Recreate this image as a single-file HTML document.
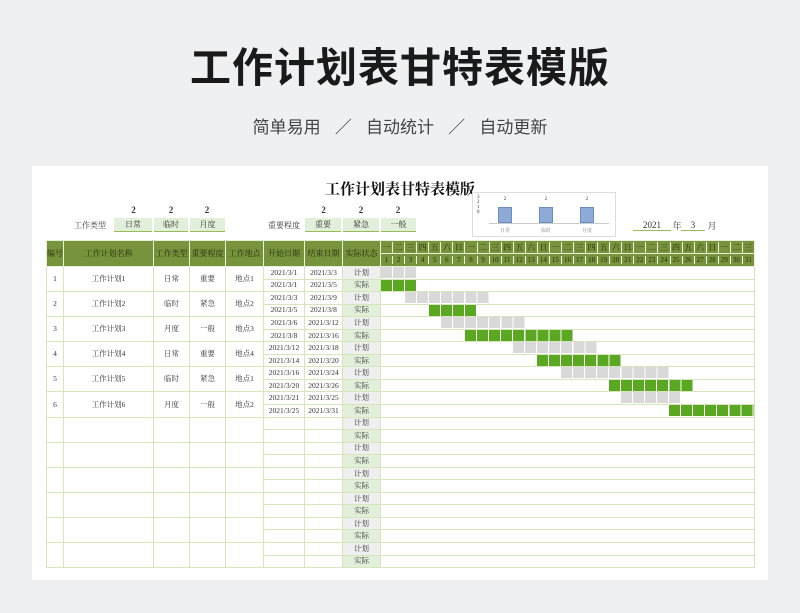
<!DOCTYPE html>
<html><head><meta charset="utf-8"><style>
*{margin:0;padding:0;box-sizing:border-box}
body{width:800px;height:613px;background:#eff0f2;position:relative;overflow:hidden;font-family:"Liberation Serif","Noto Serif CJK SC",serif}
.h1{position:absolute;top:34px;left:0;width:800px;text-align:center;font:bold 41px "Liberation Sans","Noto Sans CJK SC",sans-serif;color:#1a1a1a;letter-spacing:1px}
.sub{position:absolute;top:113px;left:0;width:800px;text-align:center;font:17px "Liberation Sans","Noto Sans CJK SC",sans-serif;color:#444;word-spacing:0}
.card{position:absolute;left:32px;top:166px;width:736px;height:414px;background:#fff}
.a{position:absolute;font-size:8px;color:#333;text-align:center}
.box{position:absolute;height:14px;background:#e2efda;border-bottom:1px solid #9bbb59;font-size:8px;line-height:13px;text-align:center;color:#333}
table{position:absolute;left:46px;top:240px;border-collapse:collapse;table-layout:fixed;font-size:7.5px;color:#333}
td{border:1px solid #d8e4bc;text-align:center;height:12.55px;padding:0;line-height:10px;white-space:nowrap;overflow:hidden}
th{background:#77933c;color:#1f2d0c;font-weight:normal;border:1px solid #e8efd8;font-size:8px;height:13px;padding:0}
td.p{background:#efefef}td.s{background:#e2efda}
td.g{border-left:none;border-right:1px solid #d8e4bc}
.bar{position:absolute;height:11px}
</style></head><body>
<div class="h1">工作计划表甘特表模版</div>
<div class="sub">简单易用 &nbsp; ／ &nbsp; 自动统计 &nbsp; ／ &nbsp; 自动更新</div>
<div class="card"></div>
<div class="a" style="left:250px;top:178px;width:300px;font-size:15px;font-weight:bold;color:#111">工作计划表甘特表模版</div>
<div class="a" style="left:114px;top:205px;width:39px;font-weight:bold;font-size:9px">2</div>
<div class="a" style="left:153px;top:205px;width:36px;font-weight:bold;font-size:9px">2</div>
<div class="a" style="left:189px;top:205px;width:36px;font-weight:bold;font-size:9px">2</div>
<div class="a" style="left:305px;top:205px;width:37px;font-weight:bold;font-size:9px">2</div>
<div class="a" style="left:342px;top:205px;width:38px;font-weight:bold;font-size:9px">2</div>
<div class="a" style="left:380px;top:205px;width:36px;font-weight:bold;font-size:9px">2</div>
<div class="a" style="left:70px;top:220px;width:40px">工作类型</div>
<div class="box" style="left:114px;top:218px;width:38px">日常</div>
<div class="box" style="left:154px;top:218px;width:34px">临时</div>
<div class="box" style="left:190px;top:218px;width:35px">月度</div>
<div class="a" style="left:265px;top:220px;width:38px">重要程度</div>
<div class="box" style="left:305px;top:218px;width:36px">重要</div>
<div class="box" style="left:343px;top:218px;width:36px">紧急</div>
<div class="box" style="left:381px;top:218px;width:35px">一般</div>
<div style="position:absolute;left:472px;top:192px;width:144px;height:45px;border:1px solid #ddd;background:#fff">
<div style="position:absolute;left:16px;top:30px;width:120px;height:1px;background:#ccc"></div>
<div class="a" style="left:4px;top:2px;font-size:5px">3<br>2<br>1<br>0</div>
<div style="position:absolute;left:25px;top:14px;width:14px;height:16px;background:#8eaad6;border:1px solid #6a8cc0"></div>
<div style="position:absolute;left:66px;top:14px;width:14px;height:16px;background:#8eaad6;border:1px solid #6a8cc0"></div>
<div style="position:absolute;left:107px;top:14px;width:14px;height:16px;background:#8eaad6;border:1px solid #6a8cc0"></div>
<div class="a" style="left:25px;top:4px;width:14px;font-size:5px">2</div>
<div class="a" style="left:66px;top:4px;width:14px;font-size:5px">2</div>
<div class="a" style="left:107px;top:4px;width:14px;font-size:5px">2</div>
<div class="a" style="left:22px;top:34px;width:20px;font-size:5px;color:#888">日常</div>
<div class="a" style="left:63px;top:34px;width:20px;font-size:5px;color:#888">临时</div>
<div class="a" style="left:104px;top:34px;width:20px;font-size:5px;color:#888">月度</div>
</div>
<div class="a" style="left:633px;top:220px;width:38px;font-size:9px;border-bottom:1px solid #9bbb59">2021</div>
<div class="a" style="left:671px;top:219px;width:12px;font-size:9px">年</div>
<div class="a" style="left:681px;top:220px;width:24px;font-size:9px;border-bottom:1px solid #9bbb59">3</div>
<div class="a" style="left:706px;top:219px;width:12px;font-size:9px">月</div>

<table>
<colgroup><col style="width:17px"><col style="width:90px"><col style="width:36px"><col style="width:36px"><col style="width:38px"><col style="width:41px"><col style="width:38px"><col style="width:38px"><col style="width:374px"></colgroup>
<tr><th rowspan="2">编号</th><th rowspan="2">工作计划名称</th><th rowspan="2">工作类型</th><th rowspan="2">重要程度</th><th rowspan="2">工作地点</th><th rowspan="2">开始日期</th><th rowspan="2">结束日期</th><th rowspan="2">实际状态</th>
<th style="padding:0"><div style="display:flex">
<span style="flex:1;border-right:1px solid #e8efd8">一</span><span style="flex:1;border-right:1px solid #e8efd8">二</span><span style="flex:1;border-right:1px solid #e8efd8">三</span><span style="flex:1;border-right:1px solid #e8efd8">四</span><span style="flex:1;border-right:1px solid #e8efd8">五</span><span style="flex:1;border-right:1px solid #e8efd8">六</span><span style="flex:1;border-right:1px solid #e8efd8">日</span><span style="flex:1;border-right:1px solid #e8efd8">一</span><span style="flex:1;border-right:1px solid #e8efd8">二</span><span style="flex:1;border-right:1px solid #e8efd8">三</span><span style="flex:1;border-right:1px solid #e8efd8">四</span><span style="flex:1;border-right:1px solid #e8efd8">五</span><span style="flex:1;border-right:1px solid #e8efd8">六</span><span style="flex:1;border-right:1px solid #e8efd8">日</span><span style="flex:1;border-right:1px solid #e8efd8">一</span><span style="flex:1;border-right:1px solid #e8efd8">二</span><span style="flex:1;border-right:1px solid #e8efd8">三</span><span style="flex:1;border-right:1px solid #e8efd8">四</span><span style="flex:1;border-right:1px solid #e8efd8">五</span><span style="flex:1;border-right:1px solid #e8efd8">六</span><span style="flex:1;border-right:1px solid #e8efd8">日</span><span style="flex:1;border-right:1px solid #e8efd8">一</span><span style="flex:1;border-right:1px solid #e8efd8">二</span><span style="flex:1;border-right:1px solid #e8efd8">三</span><span style="flex:1;border-right:1px solid #e8efd8">四</span><span style="flex:1;border-right:1px solid #e8efd8">五</span><span style="flex:1;border-right:1px solid #e8efd8">六</span><span style="flex:1;border-right:1px solid #e8efd8">日</span><span style="flex:1;border-right:1px solid #e8efd8">一</span><span style="flex:1;border-right:1px solid #e8efd8">二</span><span style="flex:1">三</span></div></th></tr>
<tr><th style="padding:0;font-size:7px"><div style="display:flex">
<span style="flex:1;border-right:1px solid #e8efd8">1</span><span style="flex:1;border-right:1px solid #e8efd8">2</span><span style="flex:1;border-right:1px solid #e8efd8">3</span><span style="flex:1;border-right:1px solid #e8efd8">4</span><span style="flex:1;border-right:1px solid #e8efd8">5</span><span style="flex:1;border-right:1px solid #e8efd8">6</span><span style="flex:1;border-right:1px solid #e8efd8">7</span><span style="flex:1;border-right:1px solid #e8efd8">8</span><span style="flex:1;border-right:1px solid #e8efd8">9</span><span style="flex:1;border-right:1px solid #e8efd8">10</span><span style="flex:1;border-right:1px solid #e8efd8">11</span><span style="flex:1;border-right:1px solid #e8efd8">12</span><span style="flex:1;border-right:1px solid #e8efd8">13</span><span style="flex:1;border-right:1px solid #e8efd8">14</span><span style="flex:1;border-right:1px solid #e8efd8">15</span><span style="flex:1;border-right:1px solid #e8efd8">16</span><span style="flex:1;border-right:1px solid #e8efd8">17</span><span style="flex:1;border-right:1px solid #e8efd8">18</span><span style="flex:1;border-right:1px solid #e8efd8">19</span><span style="flex:1;border-right:1px solid #e8efd8">20</span><span style="flex:1;border-right:1px solid #e8efd8">21</span><span style="flex:1;border-right:1px solid #e8efd8">22</span><span style="flex:1;border-right:1px solid #e8efd8">23</span><span style="flex:1;border-right:1px solid #e8efd8">24</span><span style="flex:1;border-right:1px solid #e8efd8">25</span><span style="flex:1;border-right:1px solid #e8efd8">26</span><span style="flex:1;border-right:1px solid #e8efd8">27</span><span style="flex:1;border-right:1px solid #e8efd8">28</span><span style="flex:1;border-right:1px solid #e8efd8">29</span><span style="flex:1;border-right:1px solid #e8efd8">30</span><span style="flex:1">31</span></div></th></tr>
<tr><td rowspan="2">1</td><td rowspan="2">工作计划1</td><td rowspan="2">日常</td><td rowspan="2">重要</td><td rowspan="2">地点1</td><td>2021/3/1</td><td>2021/3/3</td><td class="p">计划</td><td class="g"></td></tr>
<tr><td>2021/3/1</td><td>2021/3/5</td><td class="s">实际</td><td class="g"></td></tr>
<tr><td rowspan="2">2</td><td rowspan="2">工作计划2</td><td rowspan="2">临时</td><td rowspan="2">紧急</td><td rowspan="2">地点2</td><td>2021/3/3</td><td>2021/3/9</td><td class="p">计划</td><td class="g"></td></tr>
<tr><td>2021/3/5</td><td>2021/3/8</td><td class="s">实际</td><td class="g"></td></tr>
<tr><td rowspan="2">3</td><td rowspan="2">工作计划3</td><td rowspan="2">月度</td><td rowspan="2">一般</td><td rowspan="2">地点3</td><td>2021/3/6</td><td>2021/3/12</td><td class="p">计划</td><td class="g"></td></tr>
<tr><td>2021/3/8</td><td>2021/3/16</td><td class="s">实际</td><td class="g"></td></tr>
<tr><td rowspan="2">4</td><td rowspan="2">工作计划4</td><td rowspan="2">日常</td><td rowspan="2">重要</td><td rowspan="2">地点4</td><td>2021/3/12</td><td>2021/3/18</td><td class="p">计划</td><td class="g"></td></tr>
<tr><td>2021/3/14</td><td>2021/3/20</td><td class="s">实际</td><td class="g"></td></tr>
<tr><td rowspan="2">5</td><td rowspan="2">工作计划5</td><td rowspan="2">临时</td><td rowspan="2">紧急</td><td rowspan="2">地点1</td><td>2021/3/16</td><td>2021/3/24</td><td class="p">计划</td><td class="g"></td></tr>
<tr><td>2021/3/20</td><td>2021/3/26</td><td class="s">实际</td><td class="g"></td></tr>
<tr><td rowspan="2">6</td><td rowspan="2">工作计划6</td><td rowspan="2">月度</td><td rowspan="2">一般</td><td rowspan="2">地点2</td><td>2021/3/21</td><td>2021/3/25</td><td class="p">计划</td><td class="g"></td></tr>
<tr><td>2021/3/25</td><td>2021/3/31</td><td class="s">实际</td><td class="g"></td></tr>
<tr><td rowspan="2"></td><td rowspan="2"></td><td rowspan="2"></td><td rowspan="2"></td><td rowspan="2"></td><td></td><td></td><td class="p">计划</td><td class="g"></td></tr>
<tr><td></td><td></td><td class="s">实际</td><td class="g"></td></tr>
<tr><td rowspan="2"></td><td rowspan="2"></td><td rowspan="2"></td><td rowspan="2"></td><td rowspan="2"></td><td></td><td></td><td class="p">计划</td><td class="g"></td></tr>
<tr><td></td><td></td><td class="s">实际</td><td class="g"></td></tr>
<tr><td rowspan="2"></td><td rowspan="2"></td><td rowspan="2"></td><td rowspan="2"></td><td rowspan="2"></td><td></td><td></td><td class="p">计划</td><td class="g"></td></tr>
<tr><td></td><td></td><td class="s">实际</td><td class="g"></td></tr>
<tr><td rowspan="2"></td><td rowspan="2"></td><td rowspan="2"></td><td rowspan="2"></td><td rowspan="2"></td><td></td><td></td><td class="p">计划</td><td class="g"></td></tr>
<tr><td></td><td></td><td class="s">实际</td><td class="g"></td></tr>
<tr><td rowspan="2"></td><td rowspan="2"></td><td rowspan="2"></td><td rowspan="2"></td><td rowspan="2"></td><td></td><td></td><td class="p">计划</td><td class="g"></td></tr>
<tr><td></td><td></td><td class="s">实际</td><td class="g"></td></tr>
<tr><td rowspan="2"></td><td rowspan="2"></td><td rowspan="2"></td><td rowspan="2"></td><td rowspan="2"></td><td></td><td></td><td class="p">计划</td><td class="g"></td></tr>
<tr><td></td><td></td><td class="s">实际</td><td class="g"></td></tr>
</table>
<!-- gantt bars: x = 380 + (day-1)*12.06 -->
<div class="bar" style="left:381px;top:267px;width:35px;background:repeating-linear-gradient(90deg,#d9d9d9 0 11px,#fff 11px 12.06px)"></div>
<div class="bar" style="left:381px;top:279.5px;width:35px;background:repeating-linear-gradient(90deg,#5aa821 0 11px,#fff 11px 12.06px)"></div>
<div class="bar" style="left:405px;top:292px;width:84px;background:repeating-linear-gradient(90deg,#d9d9d9 0 11px,#fff 11px 12.06px)"></div>
<div class="bar" style="left:429px;top:304.5px;width:48px;background:repeating-linear-gradient(90deg,#5aa821 0 11px,#fff 11px 12.06px)"></div>
<div class="bar" style="left:441px;top:317px;width:84px;background:repeating-linear-gradient(90deg,#d9d9d9 0 11px,#fff 11px 12.06px)"></div>
<div class="bar" style="left:465px;top:329.5px;width:108px;background:repeating-linear-gradient(90deg,#5aa821 0 11px,#fff 11px 12.06px)"></div>
<div class="bar" style="left:513px;top:342px;width:84px;background:repeating-linear-gradient(90deg,#d9d9d9 0 11px,#fff 11px 12.06px)"></div>
<div class="bar" style="left:537px;top:354.5px;width:84px;background:repeating-linear-gradient(90deg,#5aa821 0 11px,#fff 11px 12.06px)"></div>
<div class="bar" style="left:561px;top:367px;width:108px;background:repeating-linear-gradient(90deg,#d9d9d9 0 11px,#fff 11px 12.06px)"></div>
<div class="bar" style="left:609px;top:379.5px;width:84px;background:repeating-linear-gradient(90deg,#5aa821 0 11px,#fff 11px 12.06px)"></div>
<div class="bar" style="left:621px;top:392px;width:60px;background:repeating-linear-gradient(90deg,#d9d9d9 0 11px,#fff 11px 12.06px)"></div>
<div class="bar" style="left:669px;top:404.5px;width:85px;background:repeating-linear-gradient(90deg,#5aa821 0 11px,#fff 11px 12.06px)"></div>
</body></html>
